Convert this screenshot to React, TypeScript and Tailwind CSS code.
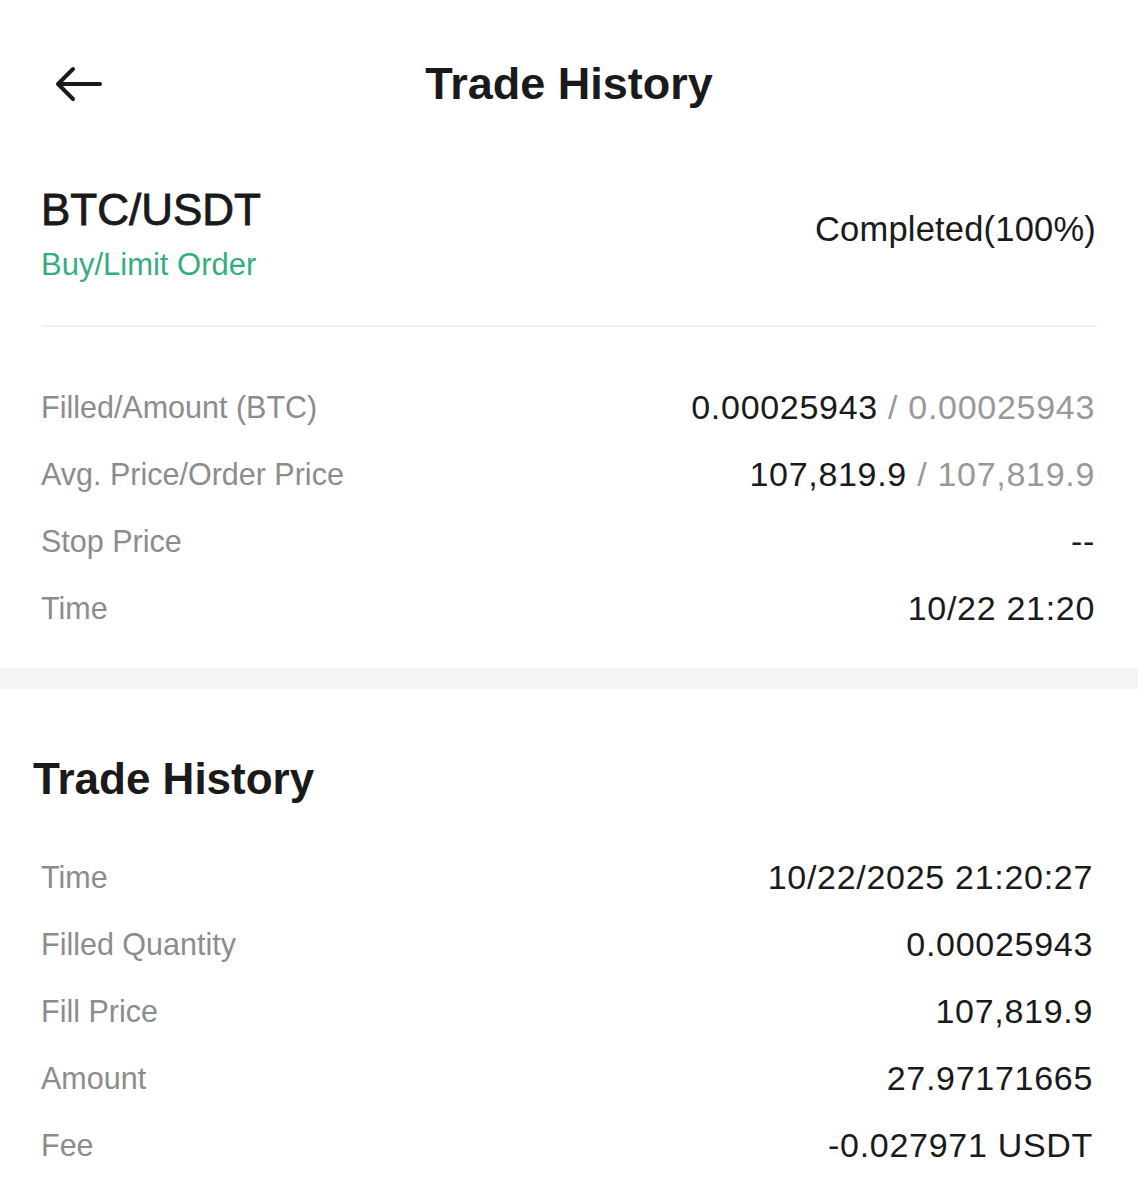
import React from "react";

const font = { fontFamily: '"Liberation Sans", Arial, sans-serif' };

type Row = { label: string; value: string; sub?: string };

const orderRows: Row[] = [
  { label: "Filled/Amount (BTC)", value: "0.00025943", sub: "0.00025943" },
  { label: "Avg. Price/Order Price", value: "107,819.9", sub: "107,819.9" },
  { label: "Stop Price", value: "--" },
  { label: "Time", value: "10/22 21:20" },
];

const tradeRows: Row[] = [
  { label: "Time", value: "10/22/2025 21:20:27" },
  { label: "Filled Quantity", value: "0.00025943" },
  { label: "Fill Price", value: "107,819.9" },
  { label: "Amount", value: "27.97171665" },
  { label: "Fee", value: "-0.027971 USDT" },
];

function BackArrow() {
  return (
    <svg width="50" height="38" viewBox="0 0 50 38" fill="none">
      <path
        d="M4 19H46M4 19L19 4M4 19L19 34"
        stroke="#1a1a1a"
        strokeWidth="4"
        strokeLinecap="round"
        strokeLinejoin="round"
      />
    </svg>
  );
}

function InfoRow({ row, right }: { row: Row; right: string }) {
  return (
    <div className="flex h-[67px] items-center justify-between">
      <span className="text-[30.5px] leading-[36px] text-[#8c8c8c]">{row.label}</span>
      <span className={`text-[34px] leading-[40px] tracking-[0.7px] text-[#1a1a1a] ${right}`}>
        {row.value}
        {row.sub && <span className="text-[#999999]"> / {row.sub}</span>}
      </span>
    </div>
  );
}

export default function App() {
  return (
    <div className="min-h-[1200px] w-full bg-white" style={font}>
      {/* header */}
      <div className="grid h-[168px] grid-cols-[1fr_auto_1fr] items-center">
        <div className="pl-[54px]">
          <BackArrow />
        </div>
        <h1 className="text-[45px] font-bold leading-[52px] text-[#1a1a1a]">Trade History</h1>
        <div />
      </div>

      {/* order summary */}
      <div className="px-[41px] pt-[16px] pb-[27px]">
        <div className="flex items-start justify-between">
          <div>
            <div className="text-[44px] leading-[52px] text-[#1a1a1a] [-webkit-text-stroke:0.8px_#1a1a1a]">
              BTC/USDT
            </div>
            <div className="mt-[11px] text-[31px] leading-[36px] text-[#35ad83]">Buy/Limit Order</div>
          </div>
          <div className="mt-[25px] pr-[1px] text-[34.5px] leading-[40px] tracking-[0.2px] text-[#1a1a1a]">
            Completed(100%)
          </div>
        </div>
        <div className="mt-[42px] h-[2px] bg-[#f0f0f0]" />
        <div className="pt-[46px]">
          {orderRows.map((r) => (
            <InfoRow key={r.label} row={r} right="pr-[2px]" />
          ))}
        </div>
      </div>

      <div className="h-[21px] bg-[#f5f5f5]" />

      {/* trade history */}
      <div className="pt-[64px]">
        <h2 className="pl-[33px] text-[44px] font-semibold leading-[52px] text-[#1a1a1a]">Trade History</h2>
        <div className="mt-[38px] px-[41px]">
          {tradeRows.map((r) => (
            <InfoRow key={r.label} row={r} right="pr-[4px]" />
          ))}
        </div>
      </div>
    </div>
  );
}
